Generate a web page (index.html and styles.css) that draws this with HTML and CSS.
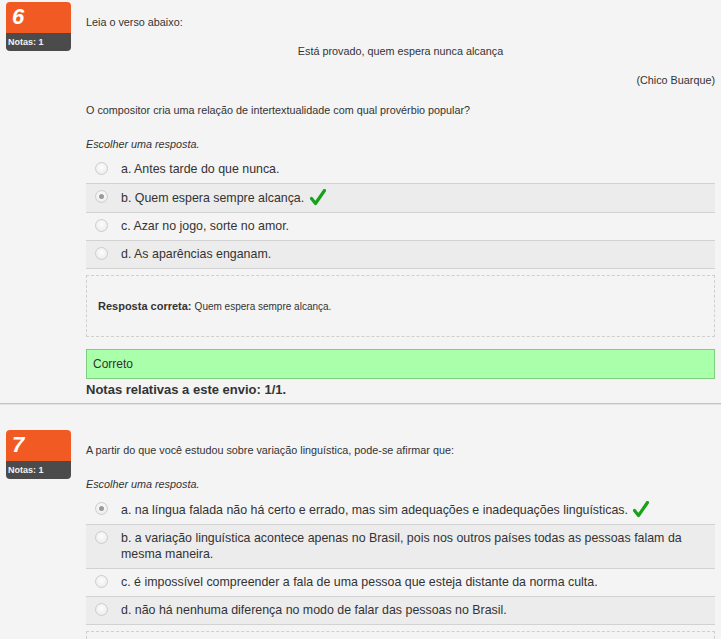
FILE: index.html
```html
<!DOCTYPE html>
<html lang="pt">
<head>
<meta charset="utf-8">
<title>Questionário</title>
<link rel="stylesheet" href="styles.css">
</head>
<body>
<div class="que q6">
  <div class="info">
    <div class="no">6</div>
    <div class="grade">Notas: 1</div>
  </div>
  <div class="content">
    <p class="qt">Leia o verso abaixo:</p>
    <p class="qt center">Está provado, quem espera nunca alcança</p>
    <p class="qt right">(Chico Buarque)</p>
    <p class="qt">O compositor cria uma relação de intertextualidade com qual provérbio popular?</p>
    <div class="prompt">Escolher uma resposta.</div>
    <div class="answer">
      <div class="opt"><span class="radio"></span><span class="lbl">a. Antes tarde do que nunca.</span></div>
      <div class="opt shade"><span class="radio checked"></span><span class="lbl">b. Quem espera sempre alcança. <svg class="tick" viewBox="0 0 16 17" width="16" height="17"><path d="M1.5 9.5 L5.5 14.5 L14.5 1.5" fill="none" stroke="#17a317" stroke-width="3.2" stroke-linecap="round" stroke-linejoin="round"/></svg></span></div>
      <div class="opt"><span class="radio"></span><span class="lbl">c. Azar no jogo, sorte no amor.</span></div>
      <div class="opt shade"><span class="radio"></span><span class="lbl">d. As aparências enganam.</span></div>
    </div>
    <div class="feedback"><b>Resposta correta:</b> <span class="fbtext">Quem espera sempre alcança.</span></div>
    <div class="correct">Correto</div>
    <div class="grading">Notas relativas a este envio: 1/1.</div>
  </div>
</div>
<div class="que q7">
  <div class="info">
    <div class="no">7</div>
    <div class="grade">Notas: 1</div>
  </div>
  <div class="content">
    <p class="qt">A partir do que você estudou sobre variação linguística, pode-se afirmar que:</p>
    <div class="prompt">Escolher uma resposta.</div>
    <div class="answer">
      <div class="opt"><span class="radio checked"></span><span class="lbl">a. na língua falada não há certo e errado, mas sim adequações e inadequações linguísticas. <svg class="tick" viewBox="0 0 16 17" width="16" height="17"><path d="M1.5 9.5 L5.5 14.5 L14.5 1.5" fill="none" stroke="#17a317" stroke-width="3.2" stroke-linecap="round" stroke-linejoin="round"/></svg></span></div>
      <div class="opt shade"><span class="radio"></span><span class="lbl">b. a variação linguística acontece apenas no Brasil, pois nos outros países todas as pessoas falam da mesma maneira.</span></div>
      <div class="opt"><span class="radio"></span><span class="lbl">c. é impossível compreender a fala de uma pessoa que esteja distante da norma culta.</span></div>
      <div class="opt shade"><span class="radio"></span><span class="lbl">d. não há nenhuma diferença no modo de falar das pessoas no Brasil.</span></div>
    </div>
    <div class="feedback short"></div>
  </div>
</div>
</body>
</html>
```
FILE: styles.css
```css
html, body {
  margin: 0;
  padding: 0;
  background: #f4f4f4;
  font-family: "Liberation Sans", Arial, sans-serif;
  color: #333;
  overflow: hidden;
}
.que {
  display: flex;
  align-items: flex-start;
  padding: 2px 6px 4px 6px;
}
.q6 {
  border-bottom: 1px solid #c4c4c4;
  box-shadow: 0 1px 0 #e2e2e2;
}
.q7 {
  padding-top: 26px;
}
.info {
  flex: none;
  width: 65px;
  margin-right: 15px;
}
.no {
  height: 31px;
  background: #f25a24;
  border-radius: 4px 4px 0 0;
  color: #fff;
  font: italic bold 22px/30px "Liberation Sans", Arial, sans-serif;
  padding-left: 6px;
}
.grade {
  height: 18px;
  background: #4b4b4b;
  border-radius: 0 0 4px 4px;
  color: #f2f2f2;
  font: bold 9px/18px "Liberation Sans", Arial, sans-serif;
  padding-left: 2px;
}
.content {
  flex: 1;
  min-width: 0;
}
.qt {
  margin: 0;
  font-size: 10.8px;
  line-height: 15px;
}
.q6 .qt:first-child { margin-top: 13px; }
.q6 .qt + .qt { margin-top: 14px; }
.q6 .qt:nth-child(4) { margin-top: 15px; }
.q7 .qt:first-child { margin-top: 13px; }
.center { text-align: center; }
.right { text-align: right; }
.prompt {
  font-size: 10.8px;
  line-height: 15px;
  font-style: italic;
  margin-top: 19px;
  margin-bottom: 4px;
}
.answer {
  display: flex;
  flex-direction: column;
}
.opt {
  display: flex;
  align-items: flex-start;
  padding: 5px 0 6px 9px;
  border-bottom: 1px solid #d2d2d2;
  font-size: 12.4px;
  line-height: 16px;
}
.opt.shade {
  background: #ececec;
}
.radio {
  flex: none;
  width: 11px;
  height: 11px;
  border: 1px solid #cdcdcd;
  border-radius: 50%;
  background: radial-gradient(circle at 50% 40%, #fdfdfd 0%, #eeeeee 70%, #e2e2e2 100%);
  margin-top: 1px;
  margin-right: 13px;
  display: flex;
  align-items: center;
  justify-content: center;
}
.radio.checked::after {
  content: "";
  width: 5px;
  height: 5px;
  border-radius: 50%;
  background: #9a9a9a;
}
.lbl {
  flex: 1;
}
.tick {
  vertical-align: -4px;
  margin-left: 2px;
}
.feedback {
  margin-top: 6px;
  border: 1px dashed #cfcfcf;
  height: 40px;
  padding: 10px 11px 10px 11px;
  font-size: 11px;
  line-height: 40px;
}
.feedback b {
  font-weight: bold;
}
.fbtext {
  font-size: 10px;
}
.feedback.short {
  height: 20px;
}
.correct {
  margin-top: 12px;
  background: #aaffaa;
  border: 1px solid #7fcf7f;
  padding: 0 6px;
  font-size: 12px;
  line-height: 28px;
}
.grading {
  font-size: 13px;
  font-weight: bold;
  line-height: 18px;
  margin-top: 2px;
}
```
